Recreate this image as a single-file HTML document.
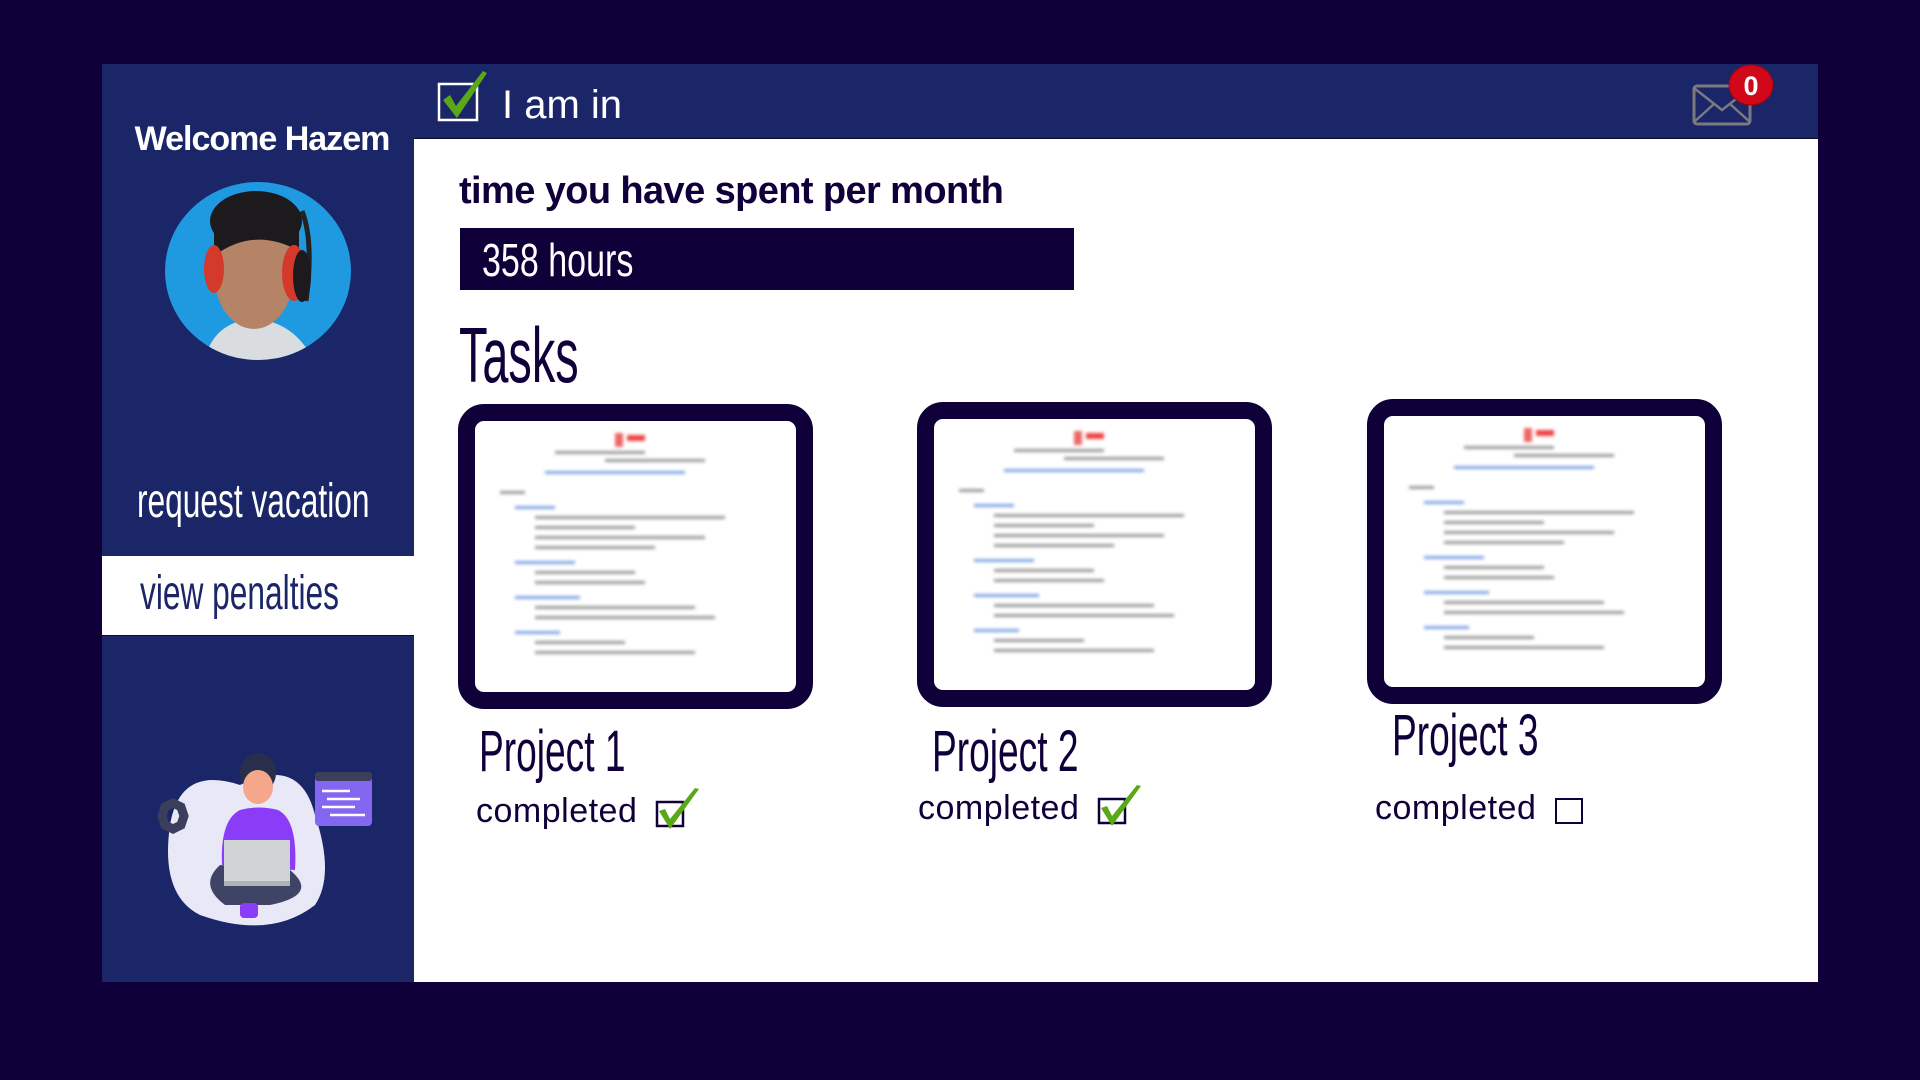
<!DOCTYPE html>
<html><head><meta charset="utf-8"><style>
*{margin:0;padding:0;box-sizing:border-box}
body{width:1920px;height:1080px;background:#10003a;position:relative;overflow:hidden;font-family:"Liberation Sans",sans-serif}
.abs{position:absolute}
.cond{position:absolute;white-space:nowrap;transform-origin:left top;font-family:"Liberation Sans",sans-serif}
.card{position:absolute;width:355px;height:305px;border:17px solid #10003a;border-radius:26px;background:#fff;overflow:hidden}
.doc{position:absolute;inset:0;filter:blur(1.6px)}
.doc i{position:absolute;display:block;height:3px;background:#9a9a9a}
.doc i.b{background:#7fa6e6}
.comp{position:absolute;font-size:34px;color:#10003a;white-space:nowrap;letter-spacing:0.5px}
</style></head><body>
<div class="abs" style="left:102px;top:64px;width:312px;height:918px;background:#1b2669"></div>
<div class="abs" style="left:414px;top:64px;width:1404px;height:75px;background:#1b2669;border-bottom:1px solid #0a0a2a"></div>
<div class="abs" style="left:414px;top:139px;width:1404px;height:843px;background:#fff"></div>

<div class="abs" style="left:102px;top:120px;width:320px;text-align:center;color:#fff;font-weight:bold;font-size:34px;letter-spacing:-1px">Welcome Hazem</div>

<svg class="abs" style="left:164px;top:181px" width="188" height="180" viewBox="0 0 188 180">
<defs><clipPath id="c"><ellipse cx="94" cy="90" rx="93" ry="89"/></clipPath></defs>
<ellipse cx="94" cy="90" rx="93" ry="89" fill="#1f9ae0"/>
<g clip-path="url(#c)">
<path d="M40 180 Q50 140 90 138 Q130 140 150 180Z" fill="#d9dde0"/>
<ellipse cx="92" cy="40" rx="46" ry="30" fill="#1d1a1e"/>
<ellipse cx="90" cy="92" rx="40" ry="56" fill="#b58466"/>
<path d="M50 45 Q90 10 135 45 L135 70 Q90 45 50 75Z" fill="#1d1a1e"/>
<ellipse cx="50" cy="88" rx="10" ry="24" fill="#d33a2c"/>
<ellipse cx="130" cy="92" rx="12" ry="28" fill="#d33a2c"/>
<path d="M138 30 Q150 60 142 120" stroke="#222" stroke-width="5" fill="none"/>
<ellipse cx="138" cy="95" rx="9" ry="26" fill="#1d1a1e"/>
</g></svg>

<div class="cond" style="left:137px;top:474px;font-size:48px;color:#fff;transform:scaleX(0.66)">request vacation</div>
<div class="abs" style="left:102px;top:556px;width:312px;height:80px;background:#fff;border-bottom:1px solid #111"></div>
<div class="cond" style="left:140px;top:566px;font-size:48px;color:#1b2669;transform:scaleX(0.66)">view penalties</div>

<svg class="abs" style="left:140px;top:745px" width="240" height="185" viewBox="0 0 240 185">
<path d="M30 80 Q40 20 100 40 Q160 10 175 70 Q195 130 175 160 Q130 195 60 170 Q20 150 30 80Z" fill="#e8e8f6"/>
<path d="M25 62 l8 -4 l8 4 l3 9 l-3 9 l-8 4 l-8 -4 l-3 -9z" fill="none" stroke="#3c3f5c" stroke-width="9"/>
<rect x="175" y="27" width="57" height="54" rx="4" fill="#8467f0"/>
<rect x="175" y="27" width="57" height="9" rx="3" fill="#3c3f5c"/>
<g stroke="#fff" stroke-width="2.5"><line x1="182" y1="46" x2="210" y2="46"/><line x1="187" y1="54" x2="220" y2="54"/><line x1="182" y1="62" x2="215" y2="62"/><line x1="190" y1="70" x2="225" y2="70"/></g>
<ellipse cx="118" cy="28" rx="18" ry="20" fill="#2a2e4a"/>
<ellipse cx="118" cy="42" rx="15" ry="17" fill="#f5a78c"/>
<path d="M100 32 Q118 12 136 30 L136 24 Q118 5 100 24Z" fill="#2a2e4a"/>
<path d="M82 120 Q80 75 100 65 Q118 60 138 65 Q158 75 155 125Z" fill="#8a3cf6"/>
<path d="M80 120 Q58 140 85 160 L130 160 Q180 150 150 125Z" fill="#3f4466"/>
<rect x="84" y="95" width="66" height="44" fill="#cfd3d4"/>
<rect x="84" y="136" width="66" height="5" fill="#aeb2b3"/>
<rect x="100" y="158" width="18" height="15" rx="4" fill="#8a3cf6"/>
</svg>

<svg class="abs" style="left:437px;top:70px" width="55" height="52" viewBox="0 0 55 52">
<rect x="2" y="14" width="38" height="36" fill="none" stroke="#fff" stroke-width="2.5"/>
<path d="M6 30 L20 48 L50 3 L46 1 L19 36 L13 25Z" fill="#5aa717"/>
</svg>
<div class="abs" style="left:502px;top:83px;font-size:40px;color:#fff">I am in</div>

<svg class="abs" style="left:1690px;top:62px" width="90" height="66" viewBox="0 0 90 66">
<rect x="4" y="24" width="56" height="38" rx="3" fill="none" stroke="#7a7a80" stroke-width="3"/>
<path d="M4 26 L32 48 L60 26 M4 60 L24 42 M60 60 L40 42" fill="none" stroke="#7a7a80" stroke-width="2.5"/>
<ellipse cx="61" cy="23" rx="22" ry="20" fill="#d0081a" stroke="#a00" stroke-width="1"/>
<text x="61" y="33" text-anchor="middle" font-family="Liberation Sans" font-weight="bold" font-size="27" fill="#fff">0</text>
</svg>

<div class="abs" style="left:459px;top:170px;font-size:38px;font-weight:bold;color:#10003a;letter-spacing:-0.6px">time you have spent per month</div>
<div class="abs" style="left:460px;top:228px;width:614px;height:62px;background:#10003a"></div>
<div class="cond" style="left:482px;top:233px;font-size:46px;color:#fff;transform:scaleX(0.74)">358 hours</div>
<div class="cond" style="left:459px;top:310px;font-size:78px;color:#10003a;transform:scaleX(0.6)">Tasks</div>

<div class="card" style="left:458px;top:404px"><div class="doc">
<i style="left:140px;top:12px;width:8px;height:14px;background:#e66"></i><i style="left:152px;top:14px;width:18px;height:6px;background:#e44"></i>
<i style="left:80px;top:30px;width:90px"></i><i style="left:130px;top:38px;width:100px"></i>
<i class="b" style="left:70px;top:50px;width:140px"></i><i style="left:25px;top:70px;width:25px"></i>
<i class="b" style="left:40px;top:85px;width:40px"></i><i style="left:60px;top:95px;width:190px"></i><i style="left:60px;top:105px;width:100px"></i><i style="left:60px;top:115px;width:170px"></i><i style="left:60px;top:125px;width:120px"></i>
<i class="b" style="left:40px;top:140px;width:60px"></i><i style="left:60px;top:150px;width:100px"></i><i style="left:60px;top:160px;width:110px"></i>
<i class="b" style="left:40px;top:175px;width:65px"></i><i style="left:60px;top:185px;width:160px"></i><i style="left:60px;top:195px;width:180px"></i>
<i class="b" style="left:40px;top:210px;width:45px"></i><i style="left:60px;top:220px;width:90px"></i><i style="left:60px;top:230px;width:160px"></i>
</div></div>
<div class="card" style="left:917px;top:402px"><div class="doc">
<i style="left:140px;top:12px;width:8px;height:14px;background:#e66"></i><i style="left:152px;top:14px;width:18px;height:6px;background:#e44"></i>
<i style="left:80px;top:30px;width:90px"></i><i style="left:130px;top:38px;width:100px"></i>
<i class="b" style="left:70px;top:50px;width:140px"></i><i style="left:25px;top:70px;width:25px"></i>
<i class="b" style="left:40px;top:85px;width:40px"></i><i style="left:60px;top:95px;width:190px"></i><i style="left:60px;top:105px;width:100px"></i><i style="left:60px;top:115px;width:170px"></i><i style="left:60px;top:125px;width:120px"></i>
<i class="b" style="left:40px;top:140px;width:60px"></i><i style="left:60px;top:150px;width:100px"></i><i style="left:60px;top:160px;width:110px"></i>
<i class="b" style="left:40px;top:175px;width:65px"></i><i style="left:60px;top:185px;width:160px"></i><i style="left:60px;top:195px;width:180px"></i>
<i class="b" style="left:40px;top:210px;width:45px"></i><i style="left:60px;top:220px;width:90px"></i><i style="left:60px;top:230px;width:160px"></i>
</div></div>
<div class="card" style="left:1367px;top:399px"><div class="doc">
<i style="left:140px;top:12px;width:8px;height:14px;background:#e66"></i><i style="left:152px;top:14px;width:18px;height:6px;background:#e44"></i>
<i style="left:80px;top:30px;width:90px"></i><i style="left:130px;top:38px;width:100px"></i>
<i class="b" style="left:70px;top:50px;width:140px"></i><i style="left:25px;top:70px;width:25px"></i>
<i class="b" style="left:40px;top:85px;width:40px"></i><i style="left:60px;top:95px;width:190px"></i><i style="left:60px;top:105px;width:100px"></i><i style="left:60px;top:115px;width:170px"></i><i style="left:60px;top:125px;width:120px"></i>
<i class="b" style="left:40px;top:140px;width:60px"></i><i style="left:60px;top:150px;width:100px"></i><i style="left:60px;top:160px;width:110px"></i>
<i class="b" style="left:40px;top:175px;width:65px"></i><i style="left:60px;top:185px;width:160px"></i><i style="left:60px;top:195px;width:180px"></i>
<i class="b" style="left:40px;top:210px;width:45px"></i><i style="left:60px;top:220px;width:90px"></i><i style="left:60px;top:230px;width:160px"></i>
</div></div>

<div class="cond" style="left:479px;top:718px;font-size:58px;color:#10003a;transform:scaleX(0.64)">Project 1</div>
<div class="cond" style="left:932px;top:718px;font-size:58px;color:#10003a;transform:scaleX(0.64)">Project 2</div>
<div class="cond" style="left:1392px;top:702px;font-size:58px;color:#10003a;transform:scaleX(0.64)">Project 3</div>

<div class="comp" style="left:476px;top:792px">completed</div>
<svg class="abs" style="left:655px;top:787px" width="46" height="44" viewBox="0 0 46 44"><rect x="2" y="15" width="26" height="24" fill="none" stroke="#10003a" stroke-width="2.5"/><path d="M4 24 L15 42 L44 2 L40 1 L15 32 L10 22Z" fill="#5aa717"/></svg>
<div class="comp" style="left:918px;top:789px">completed</div>
<svg class="abs" style="left:1097px;top:784px" width="46" height="44" viewBox="0 0 46 44"><rect x="2" y="15" width="26" height="24" fill="none" stroke="#10003a" stroke-width="2.5"/><path d="M4 24 L15 42 L44 2 L40 1 L15 32 L10 22Z" fill="#5aa717"/></svg>
<div class="comp" style="left:1375px;top:789px">completed</div>
<div class="abs" style="left:1555px;top:798px;width:28px;height:26px;border:2.5px solid #10003a"></div>
</body></html>
